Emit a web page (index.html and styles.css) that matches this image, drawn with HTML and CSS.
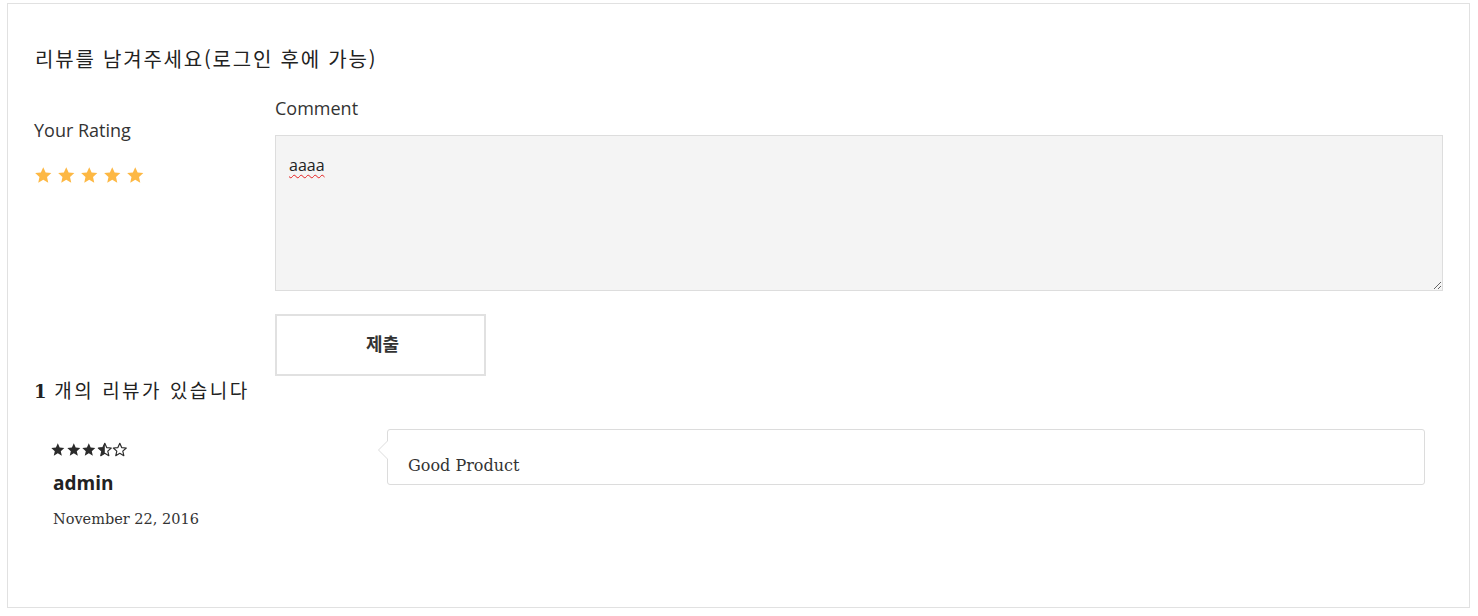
FILE: index.html
```html
<!DOCTYPE html>
<html lang="ko">
<head>
<meta charset="utf-8">
<title>Review</title>
<link rel="stylesheet" href="styles.css">
</head>
<body>
<div class="box">
  <h3 class="title">리뷰를 남겨주세요(로그인 후에 가능)</h3>
  <div class="form">
    <div class="rating-col">
      <div class="label rating-label">Your Rating</div>
      <div class="stars">
        <svg viewBox="0 0 24 24"><path d="M12 1.5l3.1 6.9 7.4.8-5.6 5 1.6 7.4L12 17.8l-6.5 3.8 1.6-7.4-5.6-5 7.4-.8z"/></svg>
        <svg viewBox="0 0 24 24"><path d="M12 1.5l3.1 6.9 7.4.8-5.6 5 1.6 7.4L12 17.8l-6.5 3.8 1.6-7.4-5.6-5 7.4-.8z"/></svg>
        <svg viewBox="0 0 24 24"><path d="M12 1.5l3.1 6.9 7.4.8-5.6 5 1.6 7.4L12 17.8l-6.5 3.8 1.6-7.4-5.6-5 7.4-.8z"/></svg>
        <svg viewBox="0 0 24 24"><path d="M12 1.5l3.1 6.9 7.4.8-5.6 5 1.6 7.4L12 17.8l-6.5 3.8 1.6-7.4-5.6-5 7.4-.8z"/></svg>
        <svg viewBox="0 0 24 24"><path d="M12 1.5l3.1 6.9 7.4.8-5.6 5 1.6 7.4L12 17.8l-6.5 3.8 1.6-7.4-5.6-5 7.4-.8z"/></svg>
      </div>
    </div>
    <div class="comment-col">
      <div class="label">Comment</div>
      <div class="textarea"><span class="misspelt">aaaa</span></div>
      <button class="submit" type="button">제출</button>
    </div>
  </div>
  <h3 class="count"><b class="num">1</b> 개의 리뷰가 있습니다</h3>
  <div class="review">
    <div class="meta">
      <div class="mini-stars">
        <svg viewBox="0 0 24 24"><path class="full" d="M12 2l2.9 6.6 7.1.7-5.4 4.8 1.6 7L12 17.4l-6.2 3.7 1.6-7L2 9.3l7.1-.7z"/></svg>
        <svg viewBox="0 0 24 24"><path class="full" d="M12 2l2.9 6.6 7.1.7-5.4 4.8 1.6 7L12 17.4l-6.2 3.7 1.6-7L2 9.3l7.1-.7z"/></svg>
        <svg viewBox="0 0 24 24"><path class="full" d="M12 2l2.9 6.6 7.1.7-5.4 4.8 1.6 7L12 17.4l-6.2 3.7 1.6-7L2 9.3l7.1-.7z"/></svg>
        <svg viewBox="0 0 24 24"><path class="empty" d="M12 2l2.9 6.6 7.1.7-5.4 4.8 1.6 7L12 17.4l-6.2 3.7 1.6-7L2 9.3l7.1-.7z"/><path class="full" d="M12 2L9.1 8.6 2 9.3l5.4 4.8-1.6 7 6.2-3.7z"/></svg>
        <svg viewBox="0 0 24 24"><path class="empty" d="M12 2l2.9 6.6 7.1.7-5.4 4.8 1.6 7L12 17.4l-6.2 3.7 1.6-7L2 9.3l7.1-.7z"/></svg>
      </div>
      <div class="author">admin</div>
      <div class="date">November 22, 2016</div>
    </div>
    <div class="bubble">Good Product</div>
  </div>
</div>
</body>
</html>
```

FILE: styles.css
```css
html, body {
  margin: 0;
  padding: 0;
  background: #fff;
}
body {
  padding: 3px 8px 8px 7px;
  font-family: "Open Sans", "Noto Sans CJK KR", sans-serif;
  color: #333;
}
.box {
  box-sizing: border-box;
  min-height: 605px;
  border: 1px solid #e1e1e1;
  padding: 38px 26px 20px 26px;
}
.title {
  margin: 0;
  font-family: "Noto Sans CJK KR", sans-serif;
  font-weight: 400;
  font-size: 20px;
  letter-spacing: 1.8px;
  line-height: 34px;
  color: #222;
  padding-left: 1px;
}
.form {
  display: flex;
  margin-top: 20px;
}
.rating-col {
  width: 241px;
  flex: none;
}
.label {
  font-family: "Open Sans", sans-serif;
  font-size: 18px;
  line-height: 24px;
  color: #333;
}
.rating-label {
  margin-top: 22px;
}
.stars {
  display: flex;
  gap: 4.6px;
  margin-top: 24px;
}
.stars svg {
  width: 18.5px;
  height: 18.5px;
  fill: #fdb844;
}
.comment-col {
  flex: 1;
}
.textarea {
  box-sizing: border-box;
  height: 156px;
  margin-top: 15px;
  background: #f4f4f4;
  border: 1px solid #dddddd;
  padding: 18px 13px;
  font-family: "Open Sans", sans-serif;
  font-size: 16px;
  line-height: 22px;
  color: #222;
  resize: vertical;
  overflow: auto;
}
.misspelt {
  text-decoration: underline wavy #e52020;
  text-decoration-thickness: 1px;
  text-underline-offset: 3px;
}
.submit {
  display: block;
  box-sizing: border-box;
  width: 211px;
  height: 62px;
  margin-top: 23px;
  background: #fff;
  border: 2px solid #e1e1e1;
  font-family: "Noto Sans CJK KR", sans-serif;
  font-weight: 700;
  font-size: 18px;
  line-height: 1;
  color: #333;
  padding: 0 0 4px 4px;
}
.count {
  margin: 0;
  font-family: "Noto Sans CJK KR", sans-serif;
  font-weight: 400;
  font-size: 19px;
  letter-spacing: 2.5px;
  line-height: 28px;
  color: #222;
}
.num {
  font-family: "DejaVu Serif", serif;
  font-weight: 700;
  letter-spacing: 0;
  font-size: 18px;
}
.review {
  display: flex;
  align-items: flex-start;
  margin-top: 23px;
}
.meta {
  width: 337px;
  flex: none;
  padding-left: 16px;
  padding-top: 13px;
}
.mini-stars {
  display: flex;
  gap: 0;
}
.mini-stars svg {
  width: 15.6px;
  height: 15.6px;
}
.mini-stars .full {
  fill: #2b2b2b;
}
.mini-stars .empty {
  fill: none;
  stroke: #2b2b2b;
  stroke-width: 1.8;
  stroke-linejoin: round;
}
.author {
  margin-top: 13px;
  padding-left: 3px;
  font-family: "Open Sans", sans-serif;
  font-weight: 700;
  font-size: 19px;
  line-height: 24px;
  color: #222;
}
.date {
  margin-top: 14px;
  padding-left: 3px;
  font-family: "DejaVu Serif", serif;
  font-size: 14.5px;
  line-height: 20px;
  color: #333;
}
.bubble {
  position: relative;
  flex: 1;
  margin-right: 18px;
  border: 1px solid #dcdcdc;
  border-radius: 3px;
  background: #fff;
  padding: 25px 20px 7px 20px;
  font-family: "DejaVu Serif", serif;
  font-size: 16px;
  line-height: 22px;
  color: #333;
}
.bubble::before {
  content: "";
  position: absolute;
  left: -10px;
  top: 10px;
  border-style: solid;
  border-width: 10px 10px 10px 0;
  border-color: transparent #dcdcdc transparent transparent;
}
.bubble::after {
  content: "";
  position: absolute;
  left: -9px;
  top: 10px;
  border-style: solid;
  border-width: 10px 10px 10px 0;
  border-color: transparent #fff transparent transparent;
}
```
